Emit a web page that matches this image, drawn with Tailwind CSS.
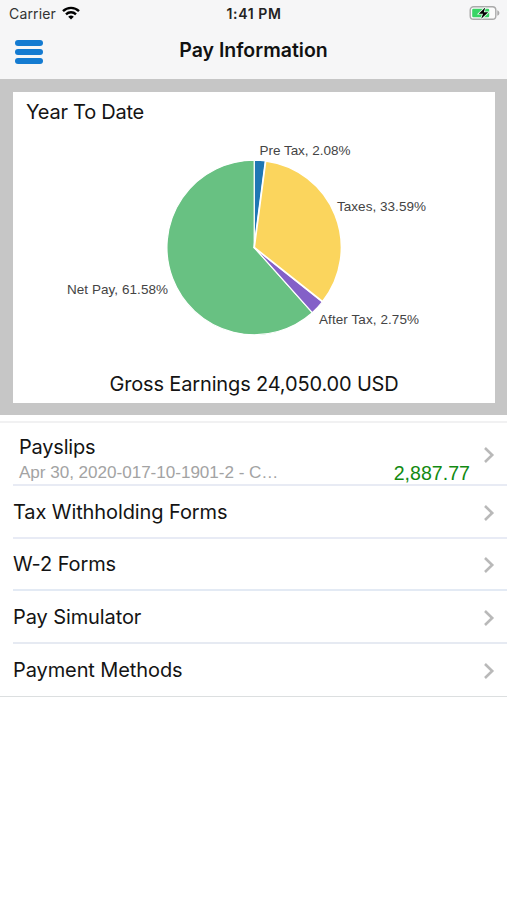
<!DOCTYPE html>
<html lang="en">
<head>
<meta charset="UTF-8">
<meta name="viewport" content="width=device-width, initial-scale=1.0">
<title>Pay Information</title>
<script src="https://cdn.jsdelivr.net/npm/@tailwindcss/browser@4"></script>
</head>
<body class="bg-white text-[#141414] font-['Inter','Liberation_Sans',sans-serif] h-[900px] overflow-hidden">
    <header class="h-[79px] bg-[#f6f6f7]">
        <!-- status bar -->
        <div class="h-[27px] grid grid-cols-3 items-center pl-[8px] pr-[7px] leading-none">
            <div class="flex items-center gap-[6px] pl-px">
                <span class="text-[#333] text-[14px] tracking-[0.15px]">Carrier</span>
                <svg class="w-[18px] h-[14px] -mt-[2px]" viewBox="0 0 18 14" fill="none" stroke="#000" stroke-width="2.4">
                    <path d="M1 5.2a11.4 11.4 0 0 1 16 0"/>
                    <path d="M4 8.3a7.2 7.2 0 0 1 10 0"/>
                    <path d="M9 13.6L6.2 10.8a4 4 0 0 1 5.6 0z" fill="#000" stroke="none"/>
                </svg>
            </div>
            <span class="text-center text-[14px] font-semibold tracking-[0.6px] text-[#222]">1:41 PM</span>
            <svg class="justify-self-end w-[32px] h-[16px] -mt-px" viewBox="0 0 32 16">
                <rect x="2.2" y="1.7" width="25.6" height="12.6" rx="3.4" fill="#fbfbfb" stroke="#aaa" stroke-width="1.4"/>
                <rect x="4.2" y="3.7" width="17" height="8.6" rx="1.2" fill="#39d565"/>
                <path d="M29.3 5.2c2.8 1 2.8 4.6 0 5.6z" fill="#aaa"/>
                <path d="M17.2 2.4L10.8 8.8h4.2l-1.8 5L20.2 7.2h-4.4z" fill="#000" stroke="#e8fbee" stroke-width="1.6" paint-order="stroke"/>
            </svg>
        </div>
        <div class="h-[52px] grid grid-cols-[1fr_auto_1fr] items-start px-[15px]">
            <button class="mt-[13px] w-[28px] flex flex-col gap-[3px]">
                <span class="w-full h-[6px] rounded-full bg-[#147bd1]"></span>
                <span class="w-full h-[6px] rounded-full bg-[#147bd1]"></span>
                <span class="w-full h-[6px] rounded-full bg-[#147bd1]"></span>
            </button>
            <h1 class="mt-[11px] text-[19.5px] leading-6 font-semibold text-[#111]">Pay Information</h1>
        </div>
    </header>

    <section class="h-[336px] bg-[#c6c6c6] pt-[13px] pr-[12px] pb-[12px] pl-[13px]">
        <div class="h-full bg-white flex flex-col">
            <h2 class="pl-[13px] pt-[8px] text-[20px] leading-6 tracking-[-0.25px]">Year To Date</h2>
            <svg class="w-[482px] h-[246px] font-['Liberation_Sans',sans-serif] text-[13.5px]" viewBox="13 124 482 246" fill="#444">
                <g stroke="#fff" stroke-width="1.2" stroke-linejoin="round">
                    <path d="M254.2 247.5V160.2A87.3 87.3 0 0 1 265.6 160.9Z" fill="#1f77b4"/>
                    <path d="M254.2 247.5L312.3 312.7A87.3 87.3 0 1 1 254.2 160.2Z" fill="#68c182"/>
                    <path d="M254.2 247.5L322.6 301.7A87.3 87.3 0 0 1 312.3 312.7Z" fill="#8460c8"/>
                    <path d="M254.2 247.5L265.6 160.9A87.3 87.3 0 0 1 322.6 301.7Z" fill="#fbd55d" stroke-width="1.8"/>
                </g>
                <text x="259.5" y="155" textLength="91">Pre Tax, 2.08%</text>
                <text x="337" y="211" textLength="89">Taxes, 33.59%</text>
                <text x="319" y="323.5" textLength="100">After Tax, 2.75%</text>
                <text x="67" y="293.5" textLength="101">Net Pay, 61.58%</text>
            </svg>
            <p class="text-center text-[20px] leading-7 tracking-[-0.15px]">Gross Earnings 24,050.00 USD</p>
        </div>
    </section>

    <ul class="mt-[6px] border-t-2 border-[#f1f1f2] text-[20px] leading-6 tracking-[-0.1px]">
        <li class="pl-[13px]">
            <div class="h-[63px] border-b-2 border-[#e8ebf4] flex pr-[12px] pl-[6px]">
                <div class="grow pt-[12px]">
                    <div class="tracking-[-0.2px]">Payslips</div>
                    <div class="mt-[2px] flex justify-between font-['Liberation_Sans',sans-serif]">
                        <span class="text-[17.1px] tracking-[-0.03px] text-[#a3a3a3]">Apr 30, 2020-017-10-1901-2 - C…</span>
                        <span class="text-[19.6px] tracking-normal text-[#128a12] mr-[13px]">2,887.77</span>
                    </div>
                </div>
                <svg class="mt-[23px] w-[12px] h-[18px]" viewBox="0 0 12 18" fill="none" stroke="#b9b9b9" stroke-width="2.6"><path d="M2 2l7.2 7L2 16"/></svg>
            </div>
        </li>
        <li class="pl-[13px]">
            <div class="h-[53px] border-b-2 border-[#e8ebf5] flex items-center justify-between pr-[12px]">
                <span>Tax Withholding Forms</span>
                <svg class="mt-[2px] w-[12px] h-[18px]" viewBox="0 0 12 18" fill="none" stroke="#b9b9b9" stroke-width="2.6"><path d="M2 2l7.2 7L2 16"/></svg>
            </div>
        </li>
        <li class="pl-[13px]">
            <div class="h-[52px] border-b-2 border-[#e3eaf4] flex items-center justify-between pr-[12px]">
                <span>W-2 Forms</span>
                <svg class="mt-[2px] w-[12px] h-[18px]" viewBox="0 0 12 18" fill="none" stroke="#b9b9b9" stroke-width="2.6"><path d="M2 2l7.2 7L2 16"/></svg>
            </div>
        </li>
        <li class="pl-[13px]">
            <div class="h-[53px] border-b-2 border-[#e6eaf2] flex items-center justify-between pr-[12px]">
                <span>Pay Simulator</span>
                <svg class="mt-[2px] w-[12px] h-[18px]" viewBox="0 0 12 18" fill="none" stroke="#b9b9b9" stroke-width="2.6"><path d="M2 2l7.2 7L2 16"/></svg>
            </div>
        </li>
        <li class="pl-[13px] border-b border-[#dcdfe0]">
            <div class="h-[52px] flex items-center justify-between pr-[12px]">
                <span>Payment Methods</span>
                <svg class="mt-[2px] w-[12px] h-[18px]" viewBox="0 0 12 18" fill="none" stroke="#b9b9b9" stroke-width="2.6"><path d="M2 2l7.2 7L2 16"/></svg>
            </div>
        </li>
    </ul>
</body>
</html>
